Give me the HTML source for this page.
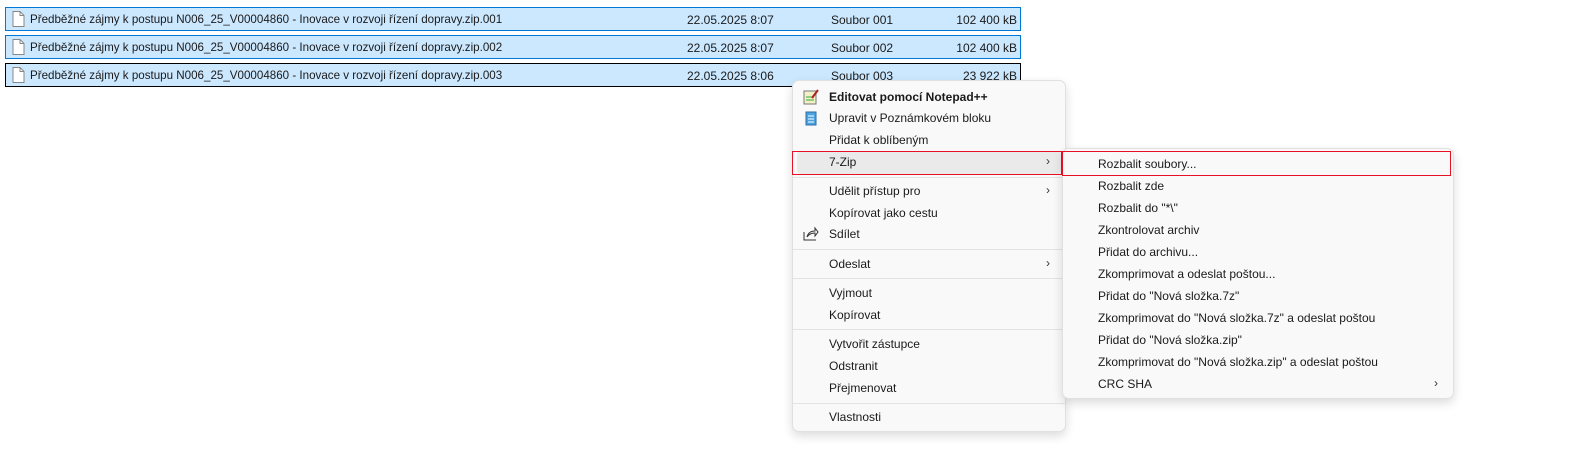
<!DOCTYPE html>
<html><head><meta charset="utf-8"><style>
*{margin:0;padding:0;box-sizing:border-box}
body{width:1584px;height:454px;background:#fff;position:relative;overflow:hidden;font-family:"Liberation Sans",sans-serif;font-size:12px;color:#1a1a1a}
.row{position:absolute;left:5px;width:1016px;height:24px;background:#cce8ff;border:1px solid #0078d7}
.row span{position:absolute;top:5px;white-space:nowrap}
.row span.nm{font-size:11.6px;top:5px;line-height:14px}
.row .ic{position:absolute;left:6px;top:3px}
.menu{position:absolute;background:#f9f9f9;border:1px solid #e0e0e0;border-radius:7px;box-shadow:0 4px 10px rgba(0,0,0,.14)}
.it{position:absolute;white-space:nowrap}
.sep{position:absolute;height:1px;background:#e3e3e3}
.chev{position:absolute;font-size:12px;color:#333}
</style></head><body>
<div class="row" style="top:7px"><svg class="ic" width="13" height="16"><path d="M1 .5h7l4 4v11H1z" fill="#fff" stroke="#888"/><path d="M8 .5v4h4" fill="none" stroke="#888"/></svg><span class="nm" style="left:24px">Předběžné zájmy k postupu N006_25_V00004860 - Inovace v rozvoji řízení dopravy.zip.001</span><span style="left:681px">22.05.2025 8:07</span><span style="left:825px">Soubor 001</span><span style="right:3px">102 400 kB</span></div>
<div class="row" style="top:35px"><svg class="ic" width="13" height="16"><path d="M1 .5h7l4 4v11H1z" fill="#fff" stroke="#888"/><path d="M8 .5v4h4" fill="none" stroke="#888"/></svg><span class="nm" style="left:24px">Předběžné zájmy k postupu N006_25_V00004860 - Inovace v rozvoji řízení dopravy.zip.002</span><span style="left:681px">22.05.2025 8:07</span><span style="left:825px">Soubor 002</span><span style="right:3px">102 400 kB</span></div>
<div class="row" style="top:63px;border-color:#000"><svg class="ic" width="13" height="16"><path d="M1 .5h7l4 4v11H1z" fill="#fff" stroke="#888"/><path d="M8 .5v4h4" fill="none" stroke="#888"/></svg><span class="nm" style="left:24px">Předběžné zájmy k postupu N006_25_V00004860 - Inovace v rozvoji řízení dopravy.zip.003</span><span style="left:681px">22.05.2025 8:06</span><span style="left:825px">Soubor 003</span><span style="right:3px">23 922 kB</span></div>

<div class="menu" style="left:792px;top:80px;width:274px;height:352px"></div>
<div style="position:absolute;left:797px;top:151px;width:264px;height:23px;background:#eaeaea;border-radius:4px"></div>
<div style="position:absolute;left:792px;top:151px;width:270px;height:24px;border:1px solid #e81123"></div>
<svg style="position:absolute;left:803px;top:89px" width="16" height="16"><rect x="1" y="2" width="12" height="13" fill="#f3f0c8" stroke="#777"/><path d="M3 8h8M3 11h8" stroke="#3a3"/><path d="M9 9l6-8" stroke="#a22" stroke-width="2"/></svg>
<svg style="position:absolute;left:805px;top:110px" width="12" height="16"><rect x="1" y="2" width="10" height="13" fill="#4aa3df" stroke="#2a6fa8"/><path d="M3 6h6M3 9h6M3 12h6" stroke="#fff"/></svg>
<svg style="position:absolute;left:803px;top:226px" width="16" height="15"><path d="M1 6v8h12" fill="none" stroke="#333"/><path d="M4 11c1-4 4-6 8-6V2l3 4-3 4V7c-3 0-6 1-8 4z" fill="none" stroke="#333"/></svg>
<div class="it" style="left:829px;top:90px;font-weight:bold">Editovat pomocí Notepad++</div>
<div class="it" style="left:829px;top:111px">Upravit v Poznámkovém bloku</div>
<div class="it" style="left:829px;top:133px">Přidat k oblíbeným</div>
<div class="it" style="left:829px;top:155px">7-Zip</div><div class="chev" style="left:1046px;top:154px">›</div>
<div class="sep" style="left:793px;top:177px;width:272px"></div>
<div class="it" style="left:829px;top:184px">Udělit přístup pro</div><div class="chev" style="left:1046px;top:183px">›</div>
<div class="it" style="left:829px;top:206px">Kopírovat jako cestu</div>
<div class="it" style="left:829px;top:227px">Sdílet</div>
<div class="sep" style="left:793px;top:249px;width:272px"></div>
<div class="it" style="left:829px;top:257px">Odeslat</div><div class="chev" style="left:1046px;top:256px">›</div>
<div class="sep" style="left:793px;top:278px;width:272px"></div>
<div class="it" style="left:829px;top:286px">Vyjmout</div>
<div class="it" style="left:829px;top:308px">Kopírovat</div>
<div class="sep" style="left:793px;top:329px;width:272px"></div>
<div class="it" style="left:829px;top:337px">Vytvořit zástupce</div>
<div class="it" style="left:829px;top:359px">Odstranit</div>
<div class="it" style="left:829px;top:381px">Přejmenovat</div>
<div class="sep" style="left:793px;top:403px;width:272px"></div>
<div class="it" style="left:829px;top:410px">Vlastnosti</div>

<div class="menu" style="left:1062px;top:148px;width:392px;height:251px"></div>
<div style="position:absolute;left:1062px;top:151px;width:389px;height:25px;border:1px solid #e81123"></div>
<div class="it" style="left:1098px;top:157px">Rozbalit soubory...</div>
<div class="it" style="left:1098px;top:179px">Rozbalit zde</div>
<div class="it" style="left:1098px;top:201px">Rozbalit do "*\"</div>
<div class="it" style="left:1098px;top:223px">Zkontrolovat archiv</div>
<div class="it" style="left:1098px;top:245px">Přidat do archivu...</div>
<div class="it" style="left:1098px;top:267px">Zkomprimovat a odeslat poštou...</div>
<div class="it" style="left:1098px;top:289px">Přidat do "Nová složka.7z"</div>
<div class="it" style="left:1098px;top:311px">Zkomprimovat do "Nová složka.7z" a odeslat poštou</div>
<div class="it" style="left:1098px;top:333px">Přidat do "Nová složka.zip"</div>
<div class="it" style="left:1098px;top:355px">Zkomprimovat do "Nová složka.zip" a odeslat poštou</div>
<div class="it" style="left:1098px;top:377px">CRC SHA</div><div class="chev" style="left:1434px;top:376px">›</div>
</body></html>
